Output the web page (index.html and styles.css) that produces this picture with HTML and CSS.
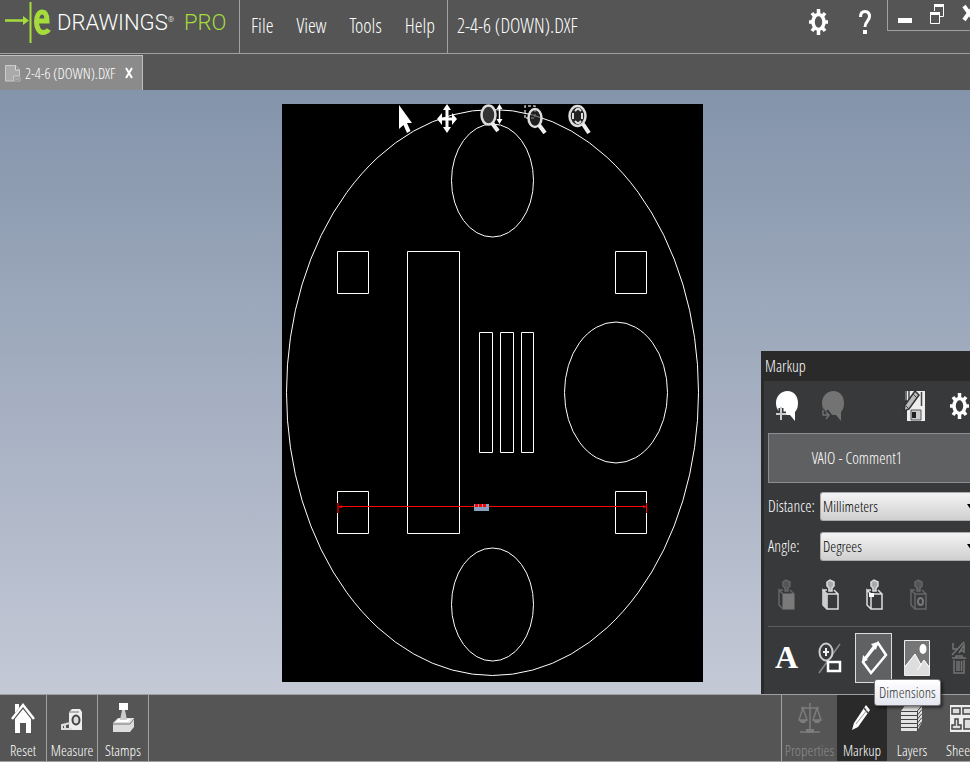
FILE: index.html
```html
<!DOCTYPE html>
<html lang="en">
<head>
    <meta charset="UTF-8">
    <meta name="viewport" content="width=device-width, initial-scale=1.0">
    <title>eDrawings Pro - 2-4-6 (DOWN).DXF</title>
    <link rel="stylesheet" href="styles.css">
</head>
<body>
    <header class="top-bar">
        <div class="logo">
            <svg class="logo-mark" width="52" height="44" viewBox="0 0 52 44" aria-hidden="true">
                <path d="M5 20.500H25" stroke="#a5dc3c" stroke-width="2.500"/>
                <path d="M23 16l6 4.500-6 4.500z" fill="#a5dc3c"/>
                <path d="M30.500 2v41" stroke="#a5dc3c" stroke-width="2"/>
                <path d="M36 21h11c0-6.500-2-9-4.700-9-3.500 0-5.800 4-5.800 10s2.800 10.500 6.300 10.500c2.500 0 4.700-1 6-3" fill="none" stroke="#a5dc3c" stroke-width="5"/>
            </svg>
            <span class="logo-name">DRAWINGS<sup>&reg;</sup></span>
            <span class="logo-pro">PRO</span>
        </div>
        <nav class="menu">
            <a href="#">File</a>
            <a href="#">View</a>
            <a href="#">Tools</a>
            <a href="#">Help</a>
        </nav>
        <h1 class="file-title">2-4-6 (DOWN).DXF</h1>
        <div class="top-actions">
            <button type="button" aria-label="Options">
                <svg width="20" height="26" viewBox="0 0 20 26"><use href="#gear"/></svg>
            </button>
            <button type="button" aria-label="Help">
                <svg width="14" height="26" viewBox="0 0 14 26"><path d="M2.500 8C2.500 4 4.500 2.500 7 2.500S11.500 4 11.500 7.500C11.500 12 7 12 7 18" fill="none" stroke="#fff" stroke-width="3"/><path d="M5 21h4v4H5z" fill="#fff"/></svg>
            </button>
        </div>
        <div class="window-buttons">
            <button type="button" aria-label="Minimize">
                <svg width="16" height="24" viewBox="0 0 16 24"><path d="M1 15h14v5H1z" fill="#fff"/></svg>
            </button>
            <button type="button" aria-label="Restore">
                <svg width="16" height="24" viewBox="0 0 16 24"><path d="M5.500 8V1.500h9v12H11M1.500 9.500h9v11h-9z" fill="none" stroke="#fff"/><path d="M5 1h10v3H5zM1 9h10v3H1z" fill="#fff"/></svg>
            </button>
            <button type="button" aria-label="Close">
                <svg width="16" height="24" viewBox="0 0 16 24"><path d="M3 3l10 14M13 3L3 17" stroke="#fff" stroke-width="4"/></svg>
            </button>
        </div>
    </header>

    <div class="tabs">
        <div class="tab">
            <svg width="16" height="17" viewBox="0 0 16 17" aria-hidden="true"><path d="M.5.500h10l4 4.500v6H8.500v5h-8z" fill="#aaa" stroke="#ccc"/><path d="M10.500.500V5h4" fill="#888" stroke="#ddd"/><path d="M9 12h6v4H9z" fill="#777" stroke="#bbb"/><path d="M10 14h4" stroke="#ddd"/></svg>
            <span>2-4-6 (DOWN).DXF</span>
            <button type="button" aria-label="Close tab">
                <svg width="8" height="12" viewBox="0 0 8 12"><path d="M1 1l6 10M7 1L1 11" stroke="#fff" stroke-width="2"/></svg>
            </button>
        </div>
    </div>

    <main class="workspace">
        <div class="sheet">
            <svg class="drawing" width="421" height="578" viewBox="282 104 421 578" role="img" aria-label="Drawing">
                <g fill="none" stroke="#fff" stroke-width="1">
                    <ellipse cx="492.500" cy="392.500" rx="206" ry="283"/>
                    <ellipse cx="492.500" cy="180.500" rx="41" ry="56.500"/>
                    <ellipse cx="492.500" cy="604.500" rx="41" ry="56.500"/>
                    <ellipse cx="616" cy="392.500" rx="51.500" ry="70.500"/>
                    <path d="M337.500 251.500h31v42h-31zM615.500 251.500h31v42h-31zM337.500 491.500h31v42h-31zM615.500 491.500h31v42h-31z"/>
                    <path d="M407.500 251.500h52v282h-52z"/>
                    <path d="M479.500 332.500h13v120h-13zM500.500 332.500h13v120h-13zM521.500 332.500h12v120h-12z"/>
                </g>
                <path d="M338 506.500h309M646.500 503v10" stroke="#f00"/>
                <path d="M338 503v10" stroke="#900" stroke-width="2"/>
                <path d="M338 507l4-2v3zM647 507l-4-2v3z" fill="#f00"/>
                <path d="M474 504h15v7h-15z" fill="#86a0bd"/>
                <path d="M475 505.500h12" stroke="#f00" stroke-width="3" stroke-dasharray="3 1"/>
            </svg>
            <div class="view-tools">
                <button type="button" aria-label="Select">
                    <svg width="24" height="30" viewBox="0 0 24 30"><path d="M7 1v24l4.500-4 3.500 8 3.500-2-3.500-8h5z" fill="#fff"/></svg>
                </button>
                <button type="button" aria-label="Pan">
                    <svg width="24" height="30" viewBox="0 0 24 30"><path d="M11 5v20M3 15h16" stroke="#fff" stroke-width="3"/><path d="M11 0l4 6H7zM11 29l4-6H7zM1 15l5-6v12zM21 15l-5-6v12z" fill="#fff"/></svg>
                </button>
                <button type="button" aria-label="Zoom">
                    <svg width="24" height="30" viewBox="0 0 24 30"><ellipse cx="8.500" cy="11" rx="7" ry="9.500" fill="#333" stroke="#ddd" stroke-width="2.500"/><path d="M12 19l6 8" stroke="#eee" stroke-width="4"/><path d="M19.500 3v14" stroke="#fff" stroke-width="1.500"/><path d="M19.500 0l3 5h-6zM19.500 20l3-5h-6z" fill="#fff"/></svg>
                </button>
                <button type="button" aria-label="Zoom to area">
                    <svg width="24" height="30" viewBox="0 0 24 30"><path d="M1 14V2h10v12z" fill="none" stroke="#bbb" stroke-width="1.500" stroke-dasharray="3 2"/><ellipse cx="11" cy="14" rx="6.500" ry="9" fill="#333" fill-opacity=".6" stroke="#ddd" stroke-width="2.500"/><path d="M15 21l6 8" stroke="#eee" stroke-width="4"/></svg>
                </button>
                <button type="button" aria-label="Zoom to fit">
                    <svg width="24" height="30" viewBox="0 0 24 30"><ellipse cx="9.500" cy="12" rx="8" ry="10" fill="#222" stroke="#ddd" stroke-width="2.500"/><path d="M15 20l6 9" stroke="#eee" stroke-width="4"/><path d="M7 7l2-2h2l2 2M7 17l2 2h2l2-2M5 9v6M14 9v6" fill="none" stroke="#ddd" stroke-width="2"/></svg>
                </button>
            </div>
        </div>

        <aside class="markup-panel">
            <h2>Markup</h2>
            <div class="panel-body">
                <div class="comment-tools">
                    <button type="button" aria-label="Add comment">
                        <svg width="24" height="32" viewBox="0 0 24 32"><path d="M12.500 1C19 1 23 6 23 13c0 4-1 7-3 9v9l-5-6C6 26 1 20 1 13S6 1 12.500 1z" fill="#fff"/><path d="M6 18v12M1 24h10" stroke="#38393a" stroke-width="5"/><path d="M6 17v13M1 24h10" stroke="#ccc" stroke-width="2"/></svg>
                    </button>
                    <button type="button" aria-label="Reply" disabled>
                        <svg width="24" height="32" viewBox="0 0 24 32"><path d="M12.500 1C19 1 23 6 23 13c0 4-1 7-3 9v9l-5-6C6 26 1 20 1 13S6 1 12.500 1z" fill="#737373"/><path d="M1 19v6h6M5 21l3 4-3 4" fill="none" stroke="#38393a" stroke-width="5"/><path d="M2 20v5h5M5 22l3 3-3 4" fill="none" stroke="#707070" stroke-width="1.500"/></svg>
                    </button>
                    <button type="button" class="save-button" aria-label="Save markup">
                        <svg width="24" height="32" viewBox="0 0 24 32"><path d="M2 1h20v30H4V10H2z" fill="#eee"/><path d="M3 1v10M6 1v8M18.500 2v14" stroke="#444" stroke-width="1.500"/><path d="M8 20h10v10H8z" fill="#ccc" stroke="#555"/><path d="M9 22h4v6H9z" fill="#222"/><path d="M2 15L12 1l4 4L6 19l-5 2z" fill="#bbb" stroke="#333" stroke-width="1.500"/><path d="M3 16l3 3M10 4l4 4" stroke="#444"/></svg>
                    </button>
                    <button type="button" aria-label="Markup options">
                        <svg width="20" height="26" viewBox="0 0 20 26"><use href="#gear"/></svg>
                    </button>
                </div>
                <button type="button" class="comment-card">VAIO - Comment1</button>
                <div class="field">
                    <label for="distance">Distance:</label>
                    <div class="select-box">
                        <select id="distance"><option>Millimeters</option><option>Inches</option></select>
                        <svg width="8" height="6" viewBox="0 0 8 6" aria-hidden="true"><path d="M0 0h8L4 6z"/></svg>
                    </div>
                </div>
                <div class="field">
                    <label for="angle">Angle:</label>
                    <div class="select-box">
                        <select id="angle"><option>Degrees</option><option>Radians</option></select>
                        <svg width="8" height="6" viewBox="0 0 8 6" aria-hidden="true"><path d="M0 0h8L4 6z"/></svg>
                    </div>
                </div>
                <div class="stamp-tools">
                    <button type="button" aria-label="Body" disabled>
                        <svg width="18" height="32" viewBox="0 0 18 32"><use href="#box" stroke="#666" fill="#555"/><path d="M6 15h11v15H6z" fill="#7a7a7a"/></svg>
                    </button>
                    <button type="button" aria-label="Face">
                        <svg width="18" height="32" viewBox="0 0 18 32"><use href="#box" stroke="#ddd" fill="#aaa"/><path d="M2 12l4 3v15l-4-4z" fill="#ccc"/></svg>
                    </button>
                    <button type="button" aria-label="Point">
                        <svg width="18" height="32" viewBox="0 0 18 32"><use href="#box" stroke="#ddd" fill="#aaa"/><path d="M4 14h5v4H4z" fill="#fff"/></svg>
                    </button>
                    <button type="button" aria-label="Hole" disabled>
                        <svg width="18" height="32" viewBox="0 0 18 32"><use href="#box" stroke="#666" fill="#555"/><ellipse cx="11.500" cy="22.500" rx="2.500" ry="3.500" fill="none" stroke="#777" stroke-width="2"/></svg>
                    </button>
                </div>
                <div class="markup-tools">
                    <button type="button" class="letter-button" aria-label="Text">A</button>
                    <button type="button" aria-label="Shapes">
                        <svg width="24" height="32" viewBox="0 0 24 32"><path d="M1 31L22 2" stroke="#888" stroke-width="1.500"/><ellipse cx="8" cy="10" rx="6.500" ry="8.500" fill="none" stroke="#ccc" stroke-width="2"/><path d="M8 6v8M5 10h6" stroke="#eee" stroke-width="2"/><path d="M10 20h12v9H10z" fill="#38393a" stroke="#fff" stroke-width="2.500"/></svg>
                    </button>
                    <button type="button" class="tool-active" aria-label="Dimensions">
                        <svg width="28" height="38" viewBox="0 0 28 38"><path d="M18 4l8 12-15 18-8-11z" fill="none" stroke="#fff" stroke-width="2.500"/><path d="M4 20L16 4" stroke="#fff" stroke-width="1.500"/><path d="M2 23l1-7 5 5zM18 3l-7 2 5 6z" fill="#fff"/></svg>
                        <span class="tooltip" role="tooltip">Dimensions</span>
                    </button>
                    <button type="button" aria-label="Image">
                        <svg width="26" height="36" viewBox="0 0 26 36"><path d="M.5.500h25v35H.5z" fill="#767676" stroke="#eee"/><ellipse cx="19" cy="9" rx="3.500" ry="5" fill="#fff"/><path d="M1 26l10-12 6 10 3-4 5 6v9H1z" fill="#ddd"/><path d="M1 27l10-13 6 11-4 5M16 26l4-6 5 7" fill="none" stroke="#fff"/></svg>
                    </button>
                    <button type="button" class="delete-button" aria-label="Delete" disabled>
                        <svg width="16" height="36" viewBox="0 0 16 36"><path d="M1 15L13 2M2 3v6h5M8 13l5-8v8M9 11h4M1 18h14M5 18v-2h6v2M3 20v13h10V20M6 21v10M8 21v10M10.500 21v10" fill="none" stroke="#737373" stroke-width="1.500"/></svg>
                    </button>
                </div>
            </div>
        </aside>
    </main>

    <footer class="bottom-bar">
        <div class="bottom-group">
            <button type="button">
                <svg width="24" height="32" viewBox="0 0 24 32"><path d="M1 17L12 3l11 14" fill="none" stroke="#fff" stroke-width="2.500"/><path d="M4 2h4v4l-4 5z" fill="#fff"/><path d="M12 7l8 10v14h-5V21H9v10H4V17z" fill="#fff"/></svg>
                Reset
            </button>
            <button type="button">
                <svg width="24" height="32" viewBox="0 0 24 32"><path d="M9 10l3-3h8l2 3v18H9z" fill="#eee"/><path d="M9 10h10" fill="none" stroke="#777"/><ellipse cx="16" cy="18" rx="3.500" ry="4.500" fill="#ddd" stroke="#444" stroke-width="2"/><path d="M10 21l-8 2v4h10M5 23v3" fill="none" stroke="#ddd" stroke-width="2"/></svg>
                Measure
            </button>
            <button type="button">
                <svg width="24" height="32" viewBox="0 0 24 32"><path d="M8 1h9v7H8z" fill="#fff"/><path d="M2 21l5-5h16v9l-4 5H2z" fill="#ddd"/><path d="M2 22h17l4-5" fill="none" stroke="#777"/><path d="M4 20l4-3h12l-3 3z" fill="#fff"/><path d="M11 8h3l2 10H9z" fill="#ccc"/></svg>
                Stamps
            </button>
        </div>
        <div class="bottom-group bottom-panels">
            <button type="button" disabled>
                <svg width="24" height="32" viewBox="0 0 24 32"><path d="M12 1v28M3 6h18M2 30h20M5 6L1 18h8zM19 6l-4 12h8z" fill="none" stroke="#7c7c7c" stroke-width="1.500"/><path d="M1 18h8l-2 3H3zM15 18h8l-2 3h-4zM8 27h8v4H8z" fill="#7c7c7c"/></svg>
                Properties
            </button>
            <button type="button" class="panel-active">
                <svg width="24" height="32" viewBox="0 0 24 32"><path d="M2 28l2-7L16 3l4 5L8 25z" fill="#fff"/><path d="M14 6l4 5" stroke="#444" stroke-width="1.500"/><path d="M6 22l11-14" stroke="#999"/></svg>
                Markup
            </button>
            <button type="button">
                <svg width="24" height="32" viewBox="0 0 24 32"><path d="M1 9l5-7h16v18l-5 9H1z" fill="#e5e5e5"/><path d="M1 9.500h16l5-6M1 13.500h16l5-6M1 17.500h16l5-6M1 21.500h16l5-6M1 25.500h16l5-6M17.500 9v20" fill="none" stroke="#444"/></svg>
                Layers
            </button>
            <button type="button">
                <svg width="24" height="32" viewBox="0 0 24 32"><path d="M0 3h24v27H0z" fill="#eee"/><path d="M2 6h8v6H2zM13 6h8v6h-8zM2 27v-4h3v-6h3v6h3v4zM14 17h8v10h-8z" fill="#ddd" stroke="#444" stroke-width="1.500"/></svg>
                Sheets
            </button>
        </div>
    </footer>

    <!-- shared icon shapes -->
    <svg class="icon-defs" width="0" height="0" aria-hidden="true">
        <defs>
            <g id="gear" fill="none" stroke="#fff">
                <ellipse cx="10.500" cy="13" rx="5.500" ry="7.500" stroke-width="3.500"/>
                <path d="M10.500 0v6M10.500 20v6M1 13h4M16 13h4M4 4L7 8M14 18l3 4M17 4L14 8M7 18l-3 4" stroke-width="3.500"/>
            </g>
            <g id="box" stroke-width="1.500">
                <path d="M6 15h11v15H6zM6 15l-4-4v15l4 4M2 11h4M13 11l4 4" fill="none"/>
                <path d="M6 3l3-2 4 2v4l-2 2v3H8V9L6 7z"/>
            </g>
        </defs>
    </svg>
</body>
</html>
```
FILE: styles.css
```css
* {
    margin: 0;
    padding: 0;
    box-sizing: border-box;
}

body {
    height: 100vh;
    display: flex;
    flex-direction: column;
    overflow: hidden;
    background-color: #545554;
    color: #fff;
    font-family: "Open Sans Condensed Light", "Liberation Sans Narrow", "Liberation Sans", sans-serif;
    font-size: 15px;
}

button {
    background: none;
    border: none;
    color: inherit;
    font: inherit;
    cursor: pointer;
}

svg {
    display: block;
    flex-shrink: 0;
}

.icon-defs {
    position: absolute;
}

/* Top bar */
.top-bar {
    display: flex;
    height: 54px;
    flex-shrink: 0;
    border-bottom: 1px solid #a0a0a0;
}

.logo {
    display: flex;
    width: 240px;
    border-right: 1px solid #a0a0a0;
    font-family: Roboto, "Liberation Sans", sans-serif;
    font-size: 22px;
    font-weight: 300;
    line-height: 46px;
}

.logo-mark {
    margin-right: 5px;
}

.logo-name {
    width: 127px;
    white-space: nowrap;
}

.logo-name sup {
    font-size: 8px;
    line-height: 8px;
}

.logo-pro {
    color: #a5dc3c;
}

.menu {
    display: flex;
    gap: 23px;
    padding: 0 12px 0 11px;
    border-right: 1px solid #a0a0a0;
    font-size: 20px;
    line-height: 52px;
}

.menu a {
    color: #fff;
    text-decoration: none;
}

.file-title {
    padding-left: 9px;
    font-size: 20px;
    font-weight: normal;
    line-height: 52px;
}

.top-actions {
    display: flex;
    gap: 30px;
    margin-left: auto;
    padding: 9px 15px 0 0;
    align-items: flex-start;
}

.window-buttons {
    display: flex;
    gap: 16px;
    width: 83px;
    height: 31px;
    padding: 3px 0 0 9px;
    overflow: hidden;
    border-left: 1px solid #a0a0a0;
    border-bottom: 1px solid #a0a0a0;
    align-items: flex-start;
}

/* Document tabs */
.tabs {
    display: flex;
    height: 36px;
    padding-top: 1px;
    flex-shrink: 0;
}

.tab {
    display: flex;
    align-items: center;
    gap: 4px;
    min-width: 143px;
    padding-left: 5px;
    background-color: #8b8b8b;
    border-top: 1px solid #c0c0c0;
    border-right: 1px solid #c0c0c0;
    white-space: nowrap;
}

.tab button {
    margin: 0 9px 0 auto;
}

/* Drawing area */
.workspace {
    position: relative;
    display: flex;
    flex: 1;
    min-height: 0;
    justify-content: center;
    padding: 14px 0 12px 14px;
    background: linear-gradient(#8494ab, #c4c9d6);
}

.sheet {
    position: relative;
    background-color: #000;
}

.view-tools {
    position: absolute;
    top: 0;
    left: 110px;
    display: flex;
    gap: 20px;
}

/* Markup panel */
.markup-panel {
    position: absolute;
    right: 0;
    bottom: 0;
    width: 209px;
    background-color: #2a2a2a;
}

.markup-panel h2 {
    padding-left: 4px;
    font-size: 16px;
    font-weight: normal;
    line-height: 30px;
}

.panel-body {
    margin-left: 3px;
    padding: 0 0 6px 4px;
    background-color: #38393a;
}

.comment-tools {
    display: flex;
    align-items: center;
    gap: 22px;
    height: 52px;
    padding: 0 0 2px 7px;
}

.save-button {
    margin-left: 36px;
}

.comment-card {
    display: block;
    width: 100%;
    height: 50px;
    padding-right: 25px;
    background-color: #5f6061;
    border: 1px solid #8a8d92;
    border-right: none;
    font-size: 16px;
}

.field {
    display: flex;
    align-items: center;
    height: 40px;
}

.comment-card + .field {
    margin-top: 3px;
}

.field label {
    width: 52px;
    font-size: 16px;
}

.select-box {
    position: relative;
    flex: 1;
    overflow: hidden;
}

.select-box select {
    display: block;
    width: 100%;
    height: 29px;
    padding-left: 2px;
    appearance: none;
    background: linear-gradient(#f4f4f4, #cfcfcf);
    border: 1px solid #aaa;
    border-right: none;
    border-radius: 3px 0 0 3px;
    color: #000;
    font: inherit;
}

.select-box svg {
    position: absolute;
    top: 12px;
    right: -5px;
}

.stamp-tools {
    display: flex;
    gap: 26px;
    height: 60px;
    padding: 13px 0 0 9px;
    align-items: flex-start;
}

.markup-tools {
    display: flex;
    align-items: center;
    height: 62px;
    border-top: 1px solid #5c5d5e;
}

.markup-tools button {
    display: flex;
    justify-content: center;
    align-items: center;
    width: 44px;
    height: 50px;
    flex-shrink: 0;
}

.markup-tools .letter-button {
    width: 37px;
    margin-right: 3px;
    font-family: "Liberation Serif", serif;
    font-size: 32px;
    font-weight: bold;
}

.markup-tools .tool-active {
    position: relative;
    width: 37px;
    margin: 0 3px;
    background-color: #606162;
    border: 1px solid #ddd;
}

.markup-tools .delete-button {
    width: 28px;
    justify-content: flex-end;
}

.tooltip {
    position: absolute;
    top: 45px;
    left: 18px;
    z-index: 2;
    padding: 0 4px;
    background: linear-gradient(#fff, #e4e6f0);
    border: 1px solid #777;
    border-radius: 3px;
    box-shadow: 2px 2px 3px rgba(0, 0, 0, 0.5);
    color: #333;
    line-height: 25px;
}

/* Bottom bar */
.bottom-bar {
    display: flex;
    justify-content: space-between;
    height: 68px;
    flex-shrink: 0;
    border-top: 1px solid #a0a0a0;
    border-bottom: 1px solid #a0a0a0;
}

.bottom-group {
    display: flex;
}

.bottom-group button {
    display: flex;
    flex-direction: column;
    align-items: center;
    width: 51px;
    padding-top: 7px;
    gap: 7px;
    border-right: 1px solid #a0a0a0;
    line-height: 19px;
}

.bottom-group button:first-child {
    width: 47px;
}

.bottom-panels {
    width: 189px;
    overflow: hidden;
    border-left: 1px solid #a0a0a0;
}

.bottom-panels button,
.bottom-panels button:first-child {
    width: 50px;
    flex-shrink: 0;
    border-right: none;
}

.bottom-panels button:first-child {
    width: 55px;
    color: #8c8c8c;
}

.bottom-panels .panel-active {
    background-color: #2a2a2a;
}
```
